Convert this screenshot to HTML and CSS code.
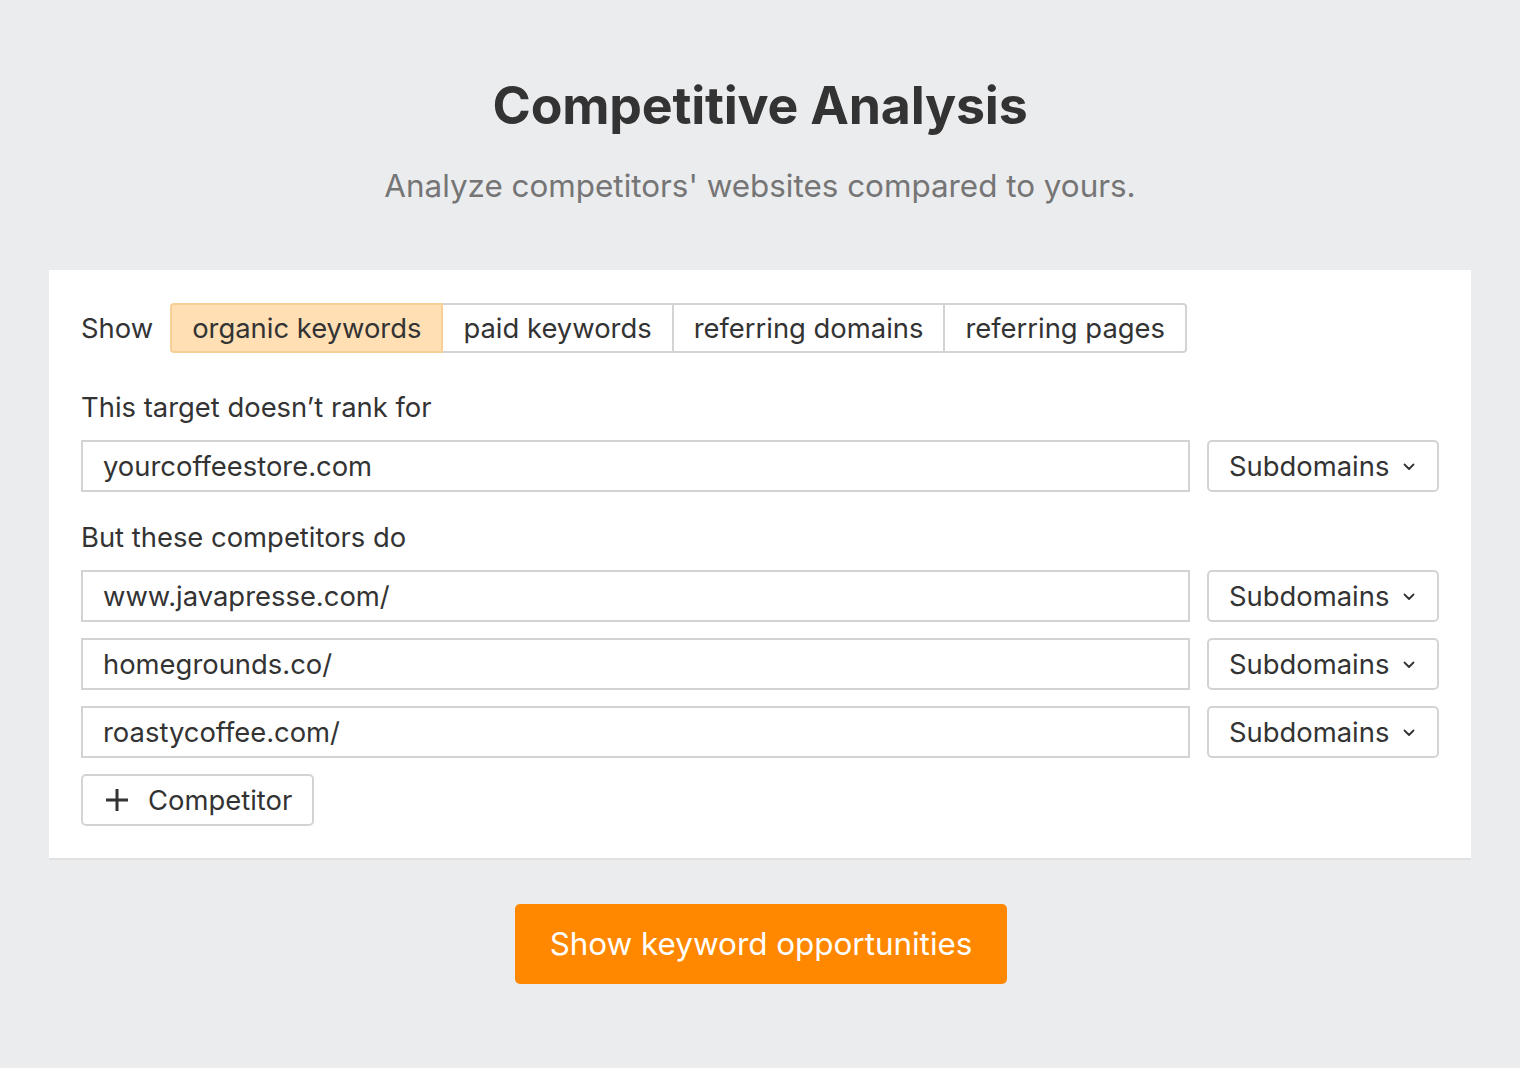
FILE: index.html
```html
<!DOCTYPE html>
<html>
<head>
<meta charset="utf-8">
<link rel="stylesheet" href="styles.css">
</head>
<body>
<main class="page">
  <h1 class="title">Competitive Analysis</h1>
  <p class="subtitle">Analyze competitors' websites compared to yours.</p>
  <section class="card">
    <div class="show-row">
      <span class="show-label">Show</span>
      <div class="tabs">
        <span class="tab active">organic keywords</span>
        <span class="tab">paid keywords</span>
        <span class="tab">referring domains</span>
        <span class="tab">referring pages</span>
      </div>
    </div>
    <div class="label first">This target doesn’t rank for</div>
    <div class="row">
      <div class="input">yourcoffeestore.com</div>
      <div class="select">Subdomains <svg class="chev" viewBox="0 0 12 8" width="12" height="8"><path d="M1.5 1.5 L6 6 L10.5 1.5" fill="none" stroke="#333" stroke-width="1.8" stroke-linecap="round" stroke-linejoin="round"/></svg></div>
    </div>
    <div class="label second">But these competitors do</div>
    <div class="rows">
      <div class="row">
        <div class="input">www.javapresse.com/</div>
        <div class="select">Subdomains <svg class="chev" viewBox="0 0 12 8" width="12" height="8"><path d="M1.5 1.5 L6 6 L10.5 1.5" fill="none" stroke="#333" stroke-width="1.8" stroke-linecap="round" stroke-linejoin="round"/></svg></div>
      </div>
      <div class="row">
        <div class="input">homegrounds.co/</div>
        <div class="select">Subdomains <svg class="chev" viewBox="0 0 12 8" width="12" height="8"><path d="M1.5 1.5 L6 6 L10.5 1.5" fill="none" stroke="#333" stroke-width="1.8" stroke-linecap="round" stroke-linejoin="round"/></svg></div>
      </div>
      <div class="row">
        <div class="input">roastycoffee.com/</div>
        <div class="select">Subdomains <svg class="chev" viewBox="0 0 12 8" width="12" height="8"><path d="M1.5 1.5 L6 6 L10.5 1.5" fill="none" stroke="#333" stroke-width="1.8" stroke-linecap="round" stroke-linejoin="round"/></svg></div>
      </div>
      <div class="add-row">
        <div class="add-btn"><svg class="plus" viewBox="0 0 24 24" width="24" height="24"><path d="M12 1 V23 M1 12 H23" stroke="#333" stroke-width="3" fill="none"/></svg>Competitor</div>
      </div>
    </div>
  </section>
  <div class="cta-wrap">
    <button class="cta">Show keyword opportunities</button>
  </div>
</main>
</body>
</html>
```
FILE: styles.css
```css
* { box-sizing: border-box; }
html, body { margin: 0; padding: 0; }
body {
  background: #ebecee;
  font-family: Inter, "Noto Sans", sans-serif;
  color: #333;
}
.page {
  width: 1520px;
  height: 1068px;
  padding: 0 49px 0 49px;
  overflow: hidden;
}
.title {
  margin: 0;
  padding-top: 74px;
  text-align: center;
  font-size: 51.8px;
  line-height: 62px;
  font-weight: 700;
  color: #333;
  letter-spacing: -0.2px;
}
.subtitle {
  margin: 0;
  margin-top: 30px;
  text-align: center;
  font-size: 31.4px;
  line-height: 40px;
  color: #757575;
}
.card {
  margin-top: 64px;
  background: #fff;
  padding: 33px 32px 32px 32px;
  border-bottom: 2px solid #e0e0e0;
  width: 1422px;
}
.show-row {
  display: flex;
  align-items: center;
}
.show-label {
  font-size: 27.4px;
  margin-left: 0;
  margin-right: 17px;
}
.tabs {
  display: flex;
}
.tab {
  display: flex;
  align-items: center;
  height: 50px;
  padding: 0 20px;
  font-size: 27.4px;
  border: 2px solid #d3d3d3;
  border-left-width: 0;
  background: #fff;
}
.tab:first-child {
  border-left-width: 2px;
  border-radius: 4px 0 0 4px;
}
.tab:last-child {
  border-radius: 0 4px 4px 0;
}
.tab.active {
  background: #ffdfb3;
  border-color: #f7cf98;
}
.label {
  font-size: 27.4px;
  line-height: 32px;
  margin-left: 0;
}
.label.first { margin-top: 38px; margin-bottom: 17px; }
.label.second { margin-top: 29px; margin-bottom: 17px; }
.rows {
  display: flex;
  flex-direction: column;
  gap: 16px;
}
.row {
  display: flex;
  gap: 17px;
}
.input {
  flex: 1;
  height: 52px;
  border: 2px solid #d3d3d3;
  display: flex;
  align-items: center;
  padding-left: 20px;
  font-size: 27.4px;
  color: #333;
}
.select {
  width: 232px;
  height: 52px;
  border: 2px solid #d3d3d3;
  border-radius: 5px;
  display: flex;
  align-items: center;
  padding-left: 20px;
  font-size: 27.4px;
  gap: 0;
}
.chev {
  margin-left: 14px;
  margin-top: 2px;
}
.add-row {
  display: flex;
}
.add-btn {
  height: 52px;
  width: 233px;
  border: 2px solid #d3d3d3;
  border-radius: 5px;
  display: flex;
  align-items: center;
  padding-left: 22px;
  font-size: 27.4px;
}
.plus {
  margin-right: 19px;
}
.cta-wrap {
  display: flex;
  justify-content: center;
  margin-top: 44px;
  padding-left: 2px;
}
.cta {
  width: 492px;
  height: 80px;
  background: #ff8800;
  border: none;
  border-radius: 5px;
  color: #fff;
  font-family: Inter, "Noto Sans", sans-serif;
  font-size: 31.4px;
  padding: 0;
}
```
